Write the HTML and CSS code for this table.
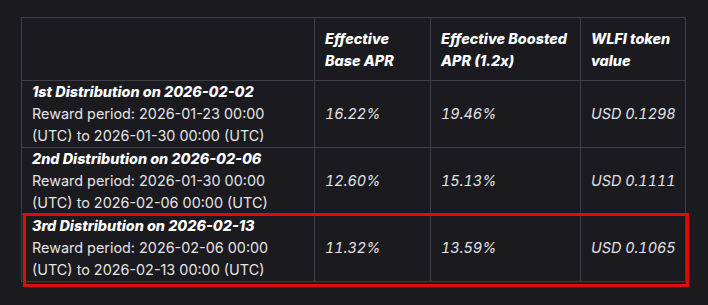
FILE: index.html
```html
<!DOCTYPE html>
<html lang="en">
<head>
<meta charset="utf-8">
<title>WLFI Distributions</title>
<link rel="stylesheet" href="styles.css">
</head>
<body>
<div class="wrap">
  <table class="dist">
    <colgroup>
      <col class="c1"><col class="c2"><col class="c3"><col class="c4">
    </colgroup>
    <thead>
      <tr>
        <th></th>
        <th>Effective<br>Base APR</th>
        <th>Effective Boosted<br>APR (1.2x)</th>
        <th>WLFI token<br>value</th>
      </tr>
    </thead>
    <tbody>
      <tr>
        <td><strong>1st Distribution on 2026-02-02</strong><br>Reward period: 2026-01-23 00:00<br>(UTC) to 2026-01-30 00:00 (UTC)</td>
        <td class="val"><em>16.22%</em></td>
        <td class="val"><em>19.46%</em></td>
        <td class="val"><em>USD 0.1298</em></td>
      </tr>
      <tr>
        <td><strong>2nd Distribution on 2026-02-06</strong><br>Reward period: 2026-01-30 00:00<br>(UTC) to 2026-02-06 00:00 (UTC)</td>
        <td class="val"><em>12.60%</em></td>
        <td class="val"><em>15.13%</em></td>
        <td class="val"><em>USD 0.1111</em></td>
      </tr>
      <tr>
        <td><strong>3rd Distribution on 2026-02-13</strong><br>Reward period: 2026-02-06 00:00<br>(UTC) to 2026-02-13 00:00 (UTC)</td>
        <td class="val"><em>11.32%</em></td>
        <td class="val"><em>13.59%</em></td>
        <td class="val"><em>USD 0.1065</em></td>
      </tr>
    </tbody>
  </table>
  <div class="highlight"></div>
</div>
</body>
</html>
```

FILE: styles.css
```css
html, body {
  margin: 0;
  padding: 0;
  background: #1a1a1f;
}
body {
  font-family: Inter, "Noto Sans", sans-serif;
  font-size: 14.4px;
  line-height: 22px;
  color: #e4e4e6;
  padding: 17px 0 0 21px;
  width: 708px;
  height: 305px;
  box-sizing: border-box;
  overflow: hidden;
}
.wrap {
  position: relative;
  width: 664px;
}
.dist {
  border-collapse: collapse;
  table-layout: fixed;
  width: 664px;
}
.c1 { width: 293px; }
.c2 { width: 116px; }
.c3 { width: 150px; }
.c4 { width: 105px; }
.dist th, .dist td {
  border: 1px solid #3e3e47;
  text-align: left;
  vertical-align: middle;
  white-space: nowrap;
}
.dist th {
  color: #ffffff;
  font-weight: 800;
  font-style: italic;
  padding: 10px 10px 8px 10px;
}
.dist td {
  padding: 0 10px;
  height: 66px;
}
.dist td strong {
  color: #ffffff;
  font-weight: 800;
  font-style: italic;
}
.dist td em {
  font-style: italic;
}
.dist td.val {
  font-variant-numeric: tabular-nums;
}
.highlight {
  position: absolute;
  left: 2px;
  top: 196px;
  width: 660px;
  height: 68px;
  border: 3px solid #e00b0b;
  pointer-events: none;
}
```
